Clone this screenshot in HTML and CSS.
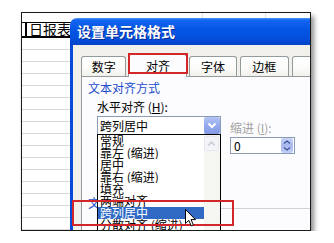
FILE: index.html
```html
<!DOCTYPE html>
<html lang="zh-CN">
<head>
<meta charset="utf-8">
<title>设置单元格格式</title>
<link rel="stylesheet" href="styles.css">
</head>
<body>
<div class="frame">
  <div class="sheet">
    <div class="row top"><span class="c1"></span><span class="c2"></span><span class="c3"></span></div>
    <div class="row head"><span class="head-text">日报表</span></div>
    <div class="row"></div><div class="row"></div><div class="row"></div><div class="row"></div>
    <div class="row"></div><div class="row"></div><div class="row"></div><div class="row"></div>
    <div class="row"></div><div class="row"></div><div class="row"></div><div class="row"></div>
    <div class="row"></div><div class="row"></div><div class="row"></div><div class="row"></div>
  </div>

  <div class="dialog">
    <div class="titlebar">设置单元格格式</div>
    <div class="dbody">
      <div class="tabs">
        <div class="tab t1">数字</div>
        <div class="tab sel">对齐</div>
        <div class="tab t3">字体</div>
        <div class="tab t4">边框</div>
        <div class="tab t5">图案</div>
      </div>
      <div class="panel">
        <div class="legend">文本对齐方式</div>
        <div class="align-row">
          <div class="hcol">
            <div class="label">水平对齐 (<u>H</u>):</div>
            <div class="combo">
              <span class="combo-text">跨列居中</span>
              <span class="combo-btn">
                <svg width="16" height="17" viewBox="0 0 16 17"><path d="M4.5 6.5 L8 10 L11.5 6.5" fill="none" stroke="#ffffff" stroke-width="2"/></svg>
              </span>
              <div class="list">
                <div class="items">
                  <div class="item">常规</div>
                  <div class="item">靠左 (缩进)</div>
                  <div class="item">居中</div>
                  <div class="item">靠右 (缩进)</div>
                  <div class="item">填充</div>
                  <div class="item">两端对齐</div>
                  <div class="item on">跨列居中</div>
                  <div class="item">分散对齐 (缩进)</div>
                </div>
                <div class="scroll">
                  <div class="sbtn">
                    <svg width="14" height="14" viewBox="0 0 14 14"><path d="M3.5 8.5 L7 5 L10.5 8.5" fill="none" stroke="#c9cdd6" stroke-width="1.6"/></svg>
                  </div>
                </div>
              </div>
            </div>
          </div>
          <div class="icol">
            <div class="label dis">缩进 (<u>I</u>):</div>
            <div class="spin">
              <span class="spin-val">0</span>
              <span class="spin-btn">
                <svg width="12" height="15" viewBox="0 0 12 15"><path d="M3 5.5 L6 3 L9 5.5 M3 9.5 L6 12 L9 9.5" fill="none" stroke="#3a4f9a" stroke-width="1.3"/></svg>
              </span>
            </div>
          </div>
        </div>
        <div class="legend ctrl"><span>文本控制</span><span class="gline"></span></div>
      </div>
    </div>
  </div>

  <div class="hl hl-tab"></div>
  <div class="hl hl-item"></div>
  <svg class="cursor" width="13" height="18" viewBox="0 0 13 18"><path d="M0.5 0.5 L0.5 14.5 L3.8 11.4 L6.2 16.8 L8.4 15.8 L6 10.6 L10.5 10.6 Z" fill="#ffffff" stroke="#000000" stroke-width="1"/></svg>
</div>
</body>
</html>
```
FILE: styles.css
```css
* { box-sizing: border-box; }
html, body { margin: 0; padding: 0; background: #ffffff; }
body { font-family: "Noto Sans CJK SC", "DejaVu Sans", sans-serif; font-size: 12px; color: #000; }

.frame {
  position: relative;
  margin: 12px 0 0 21px;
  width: 290px;
  height: 219px;
  border: 1px solid #1a1a1a;
  overflow: hidden;
  background: #ffffff;
  box-shadow: 3px 4px 5px rgba(0,0,0,0.45);
}

/* spreadsheet */
.sheet { display: flex; flex-direction: column; }
.row { height: 12px; border-bottom: 1px solid #d8d8d8; flex: none; }
.row.top { height: 10px; border-bottom: 1px solid #000; display: flex; }
.row.top span { height: 100%; border-right: 1px solid #e2e2e2; }
.row.top .c1 { width: 181px; }
.row.top .c2 { width: 63px; }
.row.top .c3 { width: 44px; border-right: none; }
.row.head {
  height: 15px;
  border-bottom: 2px solid #000;
  position: relative;
  padding-left: 7px;
  font-size: 14px;
  line-height: 13px;
  white-space: nowrap;
}
.row.head::before {
  content: "";
  position: absolute;
  left: 3px; top: 0;
  width: 2px; height: 13px;
  background: #000;
}

/* dialog */
.dialog {
  position: absolute;
  left: 48px;
  top: 5px;
  width: 272px;
  height: 240px;
}
.titlebar {
  height: 27px;
  line-height: 27px;
  padding-left: 7px;
  color: #ffffff;
  font-size: 14px;
  font-weight: bold;
  text-shadow: 1px 1px 0 #0a2f9a;
  border-top-left-radius: 7px;
  background: linear-gradient(to bottom, #4a96f8 0, #1466ef 2px, #0456e6 40%, #0350dd 75%, #0342c8 100%);
}
.dbody {
  height: 213px;
  border-left: 3px solid #0a48d8;
  background: #f1f0ea;
  padding: 10px 0 0 8px;
}
.tabs {
  display: flex;
  align-items: flex-end;
  height: 21px;
  position: relative;
  z-index: 2;
}
.tab {
  height: 20px;
  line-height: 19px;
  text-align: center;
  font-size: 12px;
  border: 1px solid #919b9c;
  border-bottom: none;
  border-radius: 3px 3px 0 0;
  background: linear-gradient(to bottom, #ffffff 0, #fbfbf9 60%, #f1f0ea 100%);
  white-space: nowrap;
}
.t1 { width: 46px; }
.tab.sel { width: 60px; height: 23px; margin-left: 2px; margin-bottom: -1px; background: #fcfcfe; line-height: 21px; }
.t3 { width: 48px; margin-left: 2px; }
.t4 { width: 50px; margin-left: 3px; }
.t5 { width: 50px; margin-left: 3px; text-align: left; padding-left: 18px; flex: none; }

.panel {
  height: 180px;
  border-top: 1px solid #919b9c;
  border-left: 1px solid #919b9c;
  background: #fcfcfe;
  position: relative;
}
.legend {
  color: #1d4ccc;
  font-size: 12px;
  line-height: 16px;
  margin: 3px 0 0 6px;
}
.align-row { display: flex; margin: 3px 0 0 15px; align-items: flex-start; }
.hcol { width: 124px; }
.label { line-height: 16px; font-size: 12px; white-space: nowrap; }
.label u { text-decoration: underline; }
.label.dis { color: #a3a3a3; }
.combo {
  position: relative;
  margin-top: 1px;
  height: 19px;
  border: 1px solid #8a9bb5;
  background: #ffffff;
  display: flex;
  align-items: center;
  justify-content: space-between;
  z-index: 3;
}
.combo-text { padding-left: 2px; font-size: 12px; line-height: 17px; }
.combo-btn {
  width: 16px; height: 17px;
  border-radius: 2px;
  background: linear-gradient(to bottom, #b3c3f5 0, #93a8ec 55%, #8299e6 100%);
  display: flex;
}
.list {
  position: absolute;
  left: -1px;
  top: 17px;
  width: 124px;
  height: 110px;
  border: 1px solid #000;
  background: #ffffff;
  display: flex;
}
.items { flex: 1; }
.item {
  height: 12px;
  line-height: 12px;
  padding-left: 2px;
  font-size: 12px;
  white-space: nowrap;
  overflow: hidden;
}
.item.on { background: #316ac5; color: #ffffff; }
.scroll { width: 16px; background: #f5f5f1; padding-top: 1px; }
.sbtn {
  width: 15px; height: 15px;
  border: 1px solid #e6e8ee;
  border-radius: 2px;
  background: #f3f4f7;
  display: flex; align-items: center; justify-content: center;
}
.icol { margin: 21px 0 0 9px; }
.spin {
  margin-top: 1px;
  width: 65px;
  height: 17px;
  border: 1px solid #8a9bb5;
  background: #ffffff;
  display: flex;
  align-items: center;
  justify-content: space-between;
  padding-right: 1px;
}
.spin-val { padding-left: 3px; font-size: 12px; line-height: 15px; }
.spin-btn {
  width: 12px; height: 15px;
  border-radius: 2px;
  background: linear-gradient(to bottom, #c9d4f6 0, #a8b8ee 50%, #c4cff5 100%);
  display: flex;
}
.legend.ctrl {
  display: flex;
  margin-top: 41px;
  position: relative;
}
.gline {
  flex: 1;
  height: 1px;
  margin: 13px 0 0 4px;
  background: #cfd3d8;
}

/* overlays */
.hl { position: absolute; border: 2px solid #d3262a; z-index: 10; }
.hl-tab { left: 106px; top: 40px; width: 60px; height: 21px; }
.hl-item { left: 50px; top: 187px; width: 162px; height: 26px; }
.cursor { position: absolute; left: 163px; top: 196px; z-index: 11; }
```
